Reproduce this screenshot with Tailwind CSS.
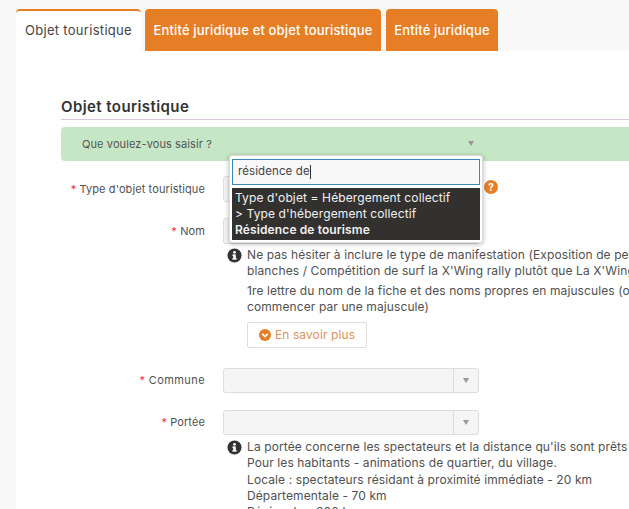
<!DOCTYPE html>
<html lang="fr">
<head>
    <meta charset="UTF-8">
    <title>Objet touristique</title>
    <script src="https://cdn.jsdelivr.net/npm/@tailwindcss/browser@4"></script>
</head>
<body class="bg-[#f8f8f8] [font-family:Inter,sans-serif] text-[12px] tracking-[0.1px] text-[#505050] overflow-hidden">
    <div class="w-[629px] h-[509px] overflow-hidden relative pt-[9px] pl-[16px]">
        <!-- Onglets -->
        <div class="flex h-[42px] text-[13px]">
            <div class="w-[125px] bg-white border-t-2 border-[#e67e25] rounded-t-[4px] flex items-center justify-center text-[#444] tracking-[0.3px]">Objet touristique</div>
            <div class="ml-[4px] w-[236px] pt-[1px] bg-[#e67e25] rounded-t-[4px] flex items-center justify-center text-white font-medium tracking-[0.15px]">Entité juridique et objet touristique</div>
            <div class="ml-[5px] w-[112px] pt-[1px] bg-[#e67e25] rounded-t-[4px] flex items-center justify-center text-white font-medium tracking-[0.15px]">Entité juridique</div>
        </div>
        <div class="bg-white h-[470px] pl-[45px] pt-[47px]">
            <h2 class="text-[15px] font-semibold text-[#333] tracking-[0.42px] leading-[18px] pb-[3px] border-b border-[#dcc8dc]">Objet touristique</h2>
            <div class="mt-[7px] h-[34px] bg-[#c6e7c5] rounded-l-[4px] flex items-center pl-[21px] relative text-[11px] text-[#555]">
                Que voulez-vous saisir ?
                <span class="absolute left-[407px] top-[14px] border-x-[3px] border-t-[5px] border-x-transparent border-t-[#999]"></span>
            </div>

            <!-- Type d'objet -->
            <div class="mt-[15px] flex">
                <label class="w-[144px] text-right text-[11px] leading-[26px]"><span class="text-[#e33]">*</span> Type d'objet touristique</label>
                <div class="ml-[18px] w-[256px] h-[26px] bg-[#f5f5f5] border border-[#ddd] rounded-[3px]"></div>
                <span class="ml-[5px] mt-[4px] w-[14px] h-[14px] rounded-full bg-[#e67e25] text-white text-[10px] font-bold flex items-center justify-center">?</span>
            </div>

            <!-- Nom -->
            <div class="mt-[16px] flex">
                <label class="w-[144px] text-right text-[11px] leading-[26px]"><span class="text-[#e33]">*</span> Nom</label>
                <div class="ml-[18px] w-[256px] h-[26px] bg-[#f5f5f5] border border-[#ddd] rounded-[3px]"></div>
            </div>
            <div class="ml-[166px] mt-[3px] flex gap-[5px] whitespace-nowrap">
                <svg class="w-[15px] h-[15px] mt-[1px] shrink-0" viewBox="0 0 16 16"><circle cx="8" cy="8" r="7.5" fill="#333"/><rect x="6.6" y="7" width="2.8" height="5" fill="#fff"/><rect x="5.6" y="11" width="4.8" height="1.3" fill="#fff"/><rect x="5.6" y="7" width="3" height="1.2" fill="#fff"/><circle cx="8" cy="4.6" r="1.4" fill="#fff"/></svg>
                <div class="leading-[16px]">
                    <p>Ne pas hésiter à inclure le type de manifestation (Exposition de peinture</p>
                    <p>blanches / Compétition de surf la X'Wing rally plutôt que La X'Wing</p>
                    <p class="mt-[4px]">1re lettre du nom de la fiche et des noms propres en majuscules (ou</p>
                    <p>commencer par une majuscule)</p>
                    <button class="mt-[7px] h-[26px] w-[120px] bg-white border border-[#ddd] rounded-[2px] flex items-center justify-center gap-[4px] text-[#dd935a]">
                        <svg class="w-[12px] h-[12px]" viewBox="0 0 12 12"><circle cx="6" cy="6" r="6" fill="#e67e25"/><path d="M3.3 4.8 6 7.5l2.7-2.7" fill="none" stroke="#fff" stroke-width="1.7"/></svg>
                        En savoir plus
                    </button>
                </div>
            </div>

            <!-- Commune -->
            <div class="mt-[20px] flex">
                <label class="w-[144px] text-right text-[11px] tracking-[0.4px] leading-[24px]"><span class="text-[#e33]">*</span> Commune</label>
                <div class="ml-[18px] w-[256px] h-[25px] bg-[#f5f5f5] border border-[#ddd] rounded-[3px] flex justify-end">
                    <span class="w-[25px] border-l border-[#ddd] flex items-center justify-center"><span class="border-x-[3px] border-t-[5px] border-x-transparent border-t-[#999]"></span></span>
                </div>
            </div>

            <!-- Portée -->
            <div class="mt-[17px] flex">
                <label class="w-[144px] text-right text-[11px] leading-[24px]"><span class="text-[#e33]">*</span> Portée</label>
                <div class="ml-[18px] w-[256px] h-[25px] bg-[#f5f5f5] border border-[#ddd] rounded-[3px] flex justify-end">
                    <span class="w-[25px] border-l border-[#ddd] flex items-center justify-center"><span class="border-x-[3px] border-t-[5px] border-x-transparent border-t-[#999]"></span></span>
                </div>
            </div>
            <div class="ml-[166px] mt-[4px] flex gap-[5px] whitespace-nowrap">
                <svg class="w-[15px] h-[15px] mt-[1px] shrink-0" viewBox="0 0 16 16"><circle cx="8" cy="8" r="7.5" fill="#333"/><rect x="6.6" y="7" width="2.8" height="5" fill="#fff"/><rect x="5.6" y="11" width="4.8" height="1.3" fill="#fff"/><rect x="5.6" y="7" width="3" height="1.2" fill="#fff"/><circle cx="8" cy="4.6" r="1.4" fill="#fff"/></svg>
                <div class="leading-[16.3px]">
                    <p>La portée concerne les spectateurs et la distance qu'ils sont prêts</p>
                    <p>Pour les habitants - animations de quartier, du village.</p>
                    <p>Locale : spectateurs résidant à proximité immédiate - 20 km</p>
                    <p>Départementale - 70 km</p>
                    <p>Régionale - 200 km</p>
                </div>
            </div>
        </div>

        <!-- Liste déroulante ouverte -->
        <div class="absolute left-[229px] top-[155px] w-[254px] h-[88px] bg-white border border-[#ddd] rounded-[3px] shadow-[0_1px_5px_rgba(0,0,0,0.3)] p-[2px] pt-[3px]">
            <div class="h-[26px] bg-[#f8f8f8] border border-[#3a8ab8] flex items-center px-[5px] text-[11.5px] text-[#444]">résidence de<span class="w-px h-[14px] bg-[#333]"></span></div>
            <div class="mt-[3px] h-[52px] bg-[#333130] text-[#f2f2f2] px-[3px] pt-[2px] text-[12px] tracking-[0.12px] leading-[16px] whitespace-nowrap">
                <p>Type d'objet = Hébergement collectif</p>
                <p>&gt; Type d'hébergement collectif</p>
                <p class="font-semibold">Résidence de tourisme</p>
            </div>
        </div>
    </div>
</body>
</html>
